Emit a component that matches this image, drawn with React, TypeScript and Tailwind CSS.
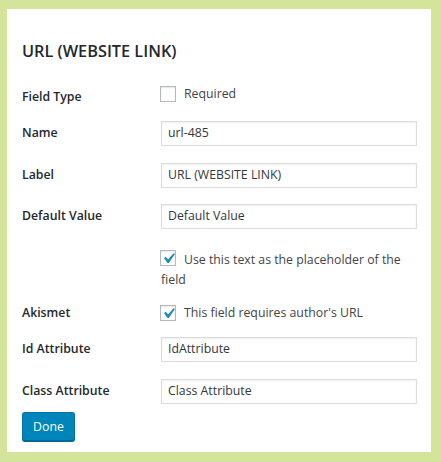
import React from "react";

const font = { fontFamily: '"Open Sans", "Noto Sans", sans-serif' };

function Check({ checked }: { checked?: boolean }) {
  return (
    <span className="inline-flex align-top w-4 h-4 -ml-px border border-[#b4b9be] bg-white shadow-[inset_0_1px_2px_rgba(0,0,0,0.1)] items-center justify-center mr-2 overflow-visible">
      {checked && (
        <svg width="21" height="21" viewBox="0 0 20 20" className="shrink-0 -m-[3px]">
          <path d="M14.83 4.89l1.34.94-5.81 8.38H9.02L5.78 9.67l1.34-1.25 2.57 2.4z" fill="#1e8cbe" />
        </svg>
      )}
    </span>
  );
}

function Field({ value, className = "" }: { value: string; className?: string }) {
  return (
    <div
      className={`w-[256px] h-[25px] border border-[#ddd] shadow-[inset_0_1px_2px_rgba(0,0,0,0.07)] bg-white px-[6px] flex items-center text-[12.3px] text-[#32373c] ${className}`}
    >
      {value}
    </div>
  );
}

function Label({ children }: { children: React.ReactNode }) {
  return <div className="w-[139px] shrink-0 text-[12.3px] font-semibold text-[#23282d]">{children}</div>;
}

export default function App() {
  return (
    <div className="w-[441px] h-[462px] bg-[#d4e59b] pt-[9px] pl-[7px]" style={font}>
      <div className="w-[424px] h-[443px] bg-white pt-[30px] pl-[15px] pr-[14px]">
        <h3 className="text-[16.3px] leading-[24px] font-semibold text-[#23282d]">URL (WEBSITE LINK)</h3>

        <div className="flex items-center mt-[23px] h-4">
          <Label>
            <span className="relative top-[3px]">Field Type</span>
          </Label>
          <label className="flex items-center text-[12.3px] text-[#444]">
            <Check />
            Required
          </label>
        </div>

        <div className="flex items-center mt-[19px]">
          <Label>Name</Label>
          <Field value="url-485" className="h-[24px]" />
        </div>

        <div className="flex items-center mt-[17px]">
          <Label>Label</Label>
          <Field value="URL (WEBSITE LINK)" />
        </div>

        <div className="flex items-center mt-[16px]">
          <Label>Default Value</Label>
          <Field value="Default Value" />
        </div>

        <div className="flex mt-[21px]">
          <Label>{""}</Label>
          <div className="w-[256px] text-[12.3px] leading-[20px] text-[#444]">
            <Check checked />
            Use this text as the placeholder of the field
          </div>
        </div>

        <div className="flex items-center mt-[15px] h-4">
          <Label>Akismet</Label>
          <label className="flex items-center text-[12.3px] text-[#444]">
            <Check checked />
            This field requires author's URL
          </label>
        </div>

        <div className="flex items-center mt-[16px]">
          <Label>Id Attribute</Label>
          <Field value="IdAttribute" className="h-[24px]" />
        </div>

        <div className="flex items-center mt-[17px]">
          <Label>Class Attribute</Label>
          <Field value="Class Attribute" />
        </div>

        <button className="mt-[8px] h-[29px] w-[53px] bg-[#0085ba] border border-[#0073aa] border-b-[#006799] rounded-[3px] shadow-[0_1px_0_#006799] text-white text-[12.3px] leading-[27px]">
          Done
        </button>
      </div>
    </div>
  );
}
